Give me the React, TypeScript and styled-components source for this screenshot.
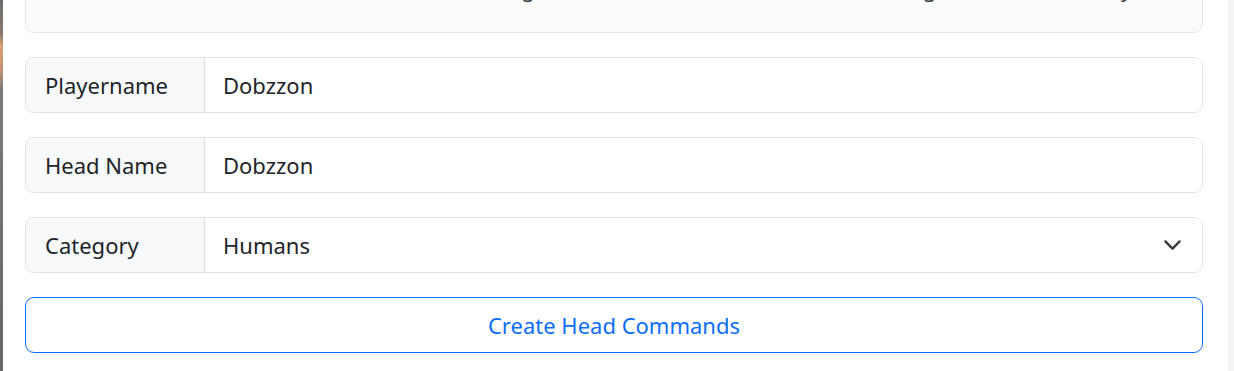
import type { FC } from 'react'
import styled, { createGlobalStyle } from 'styled-components'

const GlobalStyle = createGlobalStyle`
  html, body {
    margin: 0;
    padding: 0;
    background: #fff;
    overflow: hidden;
  }
  body {
    font-family: "Noto Sans", "Open Sans", sans-serif;
    color: #212529;
  }
`

const Page = styled.div`
  display: flex;
  flex-direction: row;
  width: 1234px;
  height: 371px;
  overflow: hidden;
`

const WindowEdge = styled.div`
  width: 3px;
  flex: none;
  background: linear-gradient(
    to bottom,
    #6b6b6b 0px,
    #8a7a6a 35px,
    #d9a070 45px,
    #c49070 70px,
    #7a7a7a 90px,
    #666 100%
  );
`

const Content = styled.main`
  flex: 1;
  min-width: 0;
  display: flex;
  flex-direction: column;
  gap: 24px;
  padding: 0 25px 0 22px;
`

const ScrollTrack = styled.div`
  width: 6px;
  flex: none;
  background: #f4f4f4;
`

const InfoCard = styled.div`
  margin-top: -40px;
  height: 73px;
  box-sizing: border-box;
  background: #fbfbfb;
  border: 1px solid #e6e7e9;
  border-radius: 9px;
  padding: 14px 20px 0 30px;
  font-size: 22px;
  line-height: 26px;
  color: #3a3d40;
  white-space: nowrap;
  overflow: hidden;
`

const InputGroup = styled.div`
  display: flex;
  flex-direction: row;
  height: 56px;
  box-sizing: border-box;
  border: 1px solid #dee2e6;
  border-radius: 9px;
  overflow: hidden;
  position: relative;
`

const GroupLabel = styled.label`
  display: flex;
  align-items: center;
  flex: none;
  width: 179px;
  box-sizing: border-box;
  padding: 0 19px;
  background: #f8f9fa;
  border-right: 1px solid #dee2e6;
  font-size: 22px;
  color: #212529;
`

const TextInput = styled.input`
  flex: 1;
  min-width: 0;
  border: none;
  outline: none;
  padding: 0 18px;
  font-family: inherit;
  font-size: 22px;
  color: #212529;
  background: #fff;
`

const Select = styled.select`
  flex: 1;
  min-width: 0;
  border: none;
  outline: none;
  appearance: none;
  padding: 0 18px;
  font-family: inherit;
  font-size: 22px;
  color: #212529;
  background: #fff;
`

const Chevron = styled.svg`
  position: absolute;
  right: 20px;
  top: 50%;
  transform: translateY(-50%);
  pointer-events: none;
`

const OutlineButton = styled.button`
  height: 56px;
  border: 1px solid #0d6efd;
  border-radius: 9px;
  background: #fff;
  color: #0d6efd;
  font-family: inherit;
  font-size: 22px;
  cursor: pointer;
`

type FieldProps = {
  label: string
  value: string
}

const TextField: FC<FieldProps> = ({ label, value }) => (
  <InputGroup>
    <GroupLabel>{label}</GroupLabel>
    <TextInput type="text" defaultValue={value} />
  </InputGroup>
)

const App: FC = () => {
  return (
    <>
      <GlobalStyle />
      <Page>
        <WindowEdge />
        <Content>
          <InfoCard>
            Enter the head owner's name, then their design and the title to be shown at a catalog of the head library
          </InfoCard>
          <TextField label="Playername" value="Dobzzon" />
          <TextField label="Head Name" value="Dobzzon" />
          <InputGroup>
            <GroupLabel>Category</GroupLabel>
            <Select defaultValue="Humans">
              <option>Humans</option>
              <option>Animals</option>
              <option>Blocks</option>
              <option>Decoration</option>
            </Select>
            <Chevron width="19" height="19" viewBox="0 0 16 16">
              <path
                d="m2 5 6 6 6-6"
                fill="none"
                stroke="#343a40"
                strokeWidth="2"
                strokeLinecap="round"
                strokeLinejoin="round"
              />
            </Chevron>
          </InputGroup>
          <OutlineButton type="button">Create Head Commands</OutlineButton>
        </Content>
        <ScrollTrack />
      </Page>
    </>
  )
}

export default App
